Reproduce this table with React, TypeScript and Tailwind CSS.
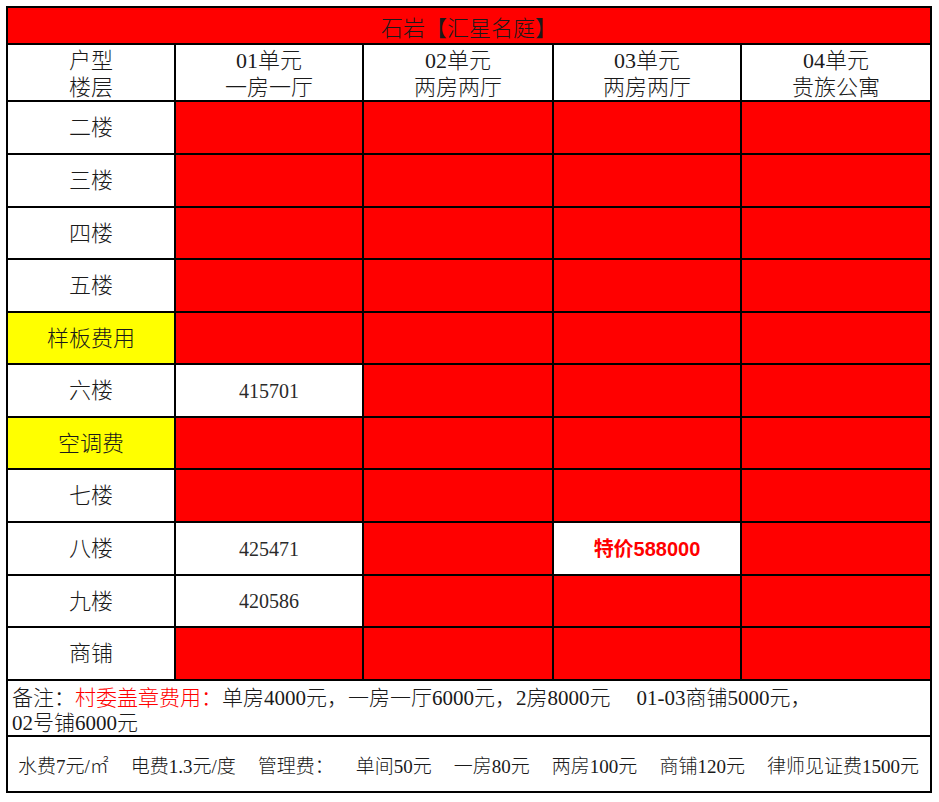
const serif = 'font-["Liberation_Serif","Noto_Sans_CJK_SC",serif]';

type Row = { label: string; yellow?: boolean; h: string; cells: (string | null)[] };

const rows: Row[] = [
  { label: '二楼', h: 'h-[51px]', cells: [null, null, null, null] },
  { label: '三楼', h: 'h-[51px]', cells: [null, null, null, null] },
  { label: '四楼', h: 'h-[50px]', cells: [null, null, null, null] },
  { label: '五楼', h: 'h-[51px]', cells: [null, null, null, null] },
  { label: '样板费用', yellow: true, h: 'h-[50px]', cells: [null, null, null, null] },
  { label: '六楼', h: 'h-[51px]', cells: ['415701', null, null, null] },
  { label: '空调费', yellow: true, h: 'h-[50px]', cells: [null, null, null, null] },
  { label: '七楼', h: 'h-[51px]', cells: [null, null, null, null] },
  { label: '八楼', h: 'h-[51px]', cells: ['425471', null, 'special', null] },
  { label: '九楼', h: 'h-[50px]', cells: ['420586', null, null, null] },
  { label: '商铺', h: 'h-[51px]', cells: [null, null, null, null] },
];

const units = [
  ['01单元', '一房一厅'],
  ['02单元', '两房两厅'],
  ['03单元', '两房两厅'],
  ['04单元', '贵族公寓'],
];

const fees = ['水费7元/㎡', '电费1.3元/度', '管理费：', '单间50元', '一房80元', '两房100元', '商铺120元', '律师见证费1500元'];

export default function App() {
  return (
    <div className="min-h-screen bg-white pt-[6px] pl-[6px]">
      <div
        className={`grid w-max grid-cols-[166px_186px_188px_186px_188px] gap-[2px] bg-black p-[2px] text-[#1a1a1a] font-light ${serif}`}
      >
        {/* title */}
        <div className="col-span-5 flex h-[35px] items-center justify-center bg-[#ff0000] pt-[6px] text-[22px]">
          石岩【汇星名庭】
        </div>

        {/* header */}
        <div className="flex h-[55px] flex-col items-center justify-center bg-white pt-[2px] text-[22px] leading-[27px]">
          <span>户型</span>
          <span>楼层</span>
        </div>
        {units.map(([a, b]) => (
          <div key={a} className="flex h-[55px] flex-col items-center justify-center bg-white pt-[2px] text-[22px] leading-[27px]">
            <span>{a}</span>
            <span>{b}</span>
          </div>
        ))}

        {/* floors */}
        {rows.map((r) => (
          <div key={r.label} className="contents">
            <div
              className={`flex ${r.h} items-center justify-center text-[22px] ${r.yellow ? 'bg-[#ffff00]' : 'bg-white'}`}
            >
              {r.label}
            </div>
            {r.cells.map((c, i) =>
              c === null ? (
                <div key={i} className={`${r.h} bg-[#ff0000]`} />
              ) : c === 'special' ? (
                <div
                  key={i}
                  className={`flex ${r.h} items-center justify-center bg-white text-[20px] font-bold text-[#ff0000] font-["Liberation_Sans","Noto_Sans_CJK_SC",sans-serif]`}
                >
                  特价588000
                </div>
              ) : (
                <div key={i} className={`flex ${r.h} items-center justify-center bg-white text-[20px] text-[#2a2a2a]`}>
                  {c}
                </div>
              )
            )}
          </div>
        ))}

        {/* notes */}
        <div className="col-span-5 h-[54px] bg-white px-[4px] pt-[5px] text-[21px] leading-[25px]">
          备注：<span className="text-[#ff0000]">村委盖章费用：</span>单房4000元，一房一厅6000元，2房8000元
          <span className="ml-[26px]">01-03商铺5000元，</span>
          <br />
          02号铺6000元
        </div>

        {/* fees */}
        <div className="col-span-5 flex h-[54px] items-center justify-between bg-white pl-[10px] pr-[11px] pt-[6px] text-[19px]">
          {fees.map((f) => (
            <span key={f}>{f}</span>
          ))}
        </div>
      </div>
    </div>
  );
}
